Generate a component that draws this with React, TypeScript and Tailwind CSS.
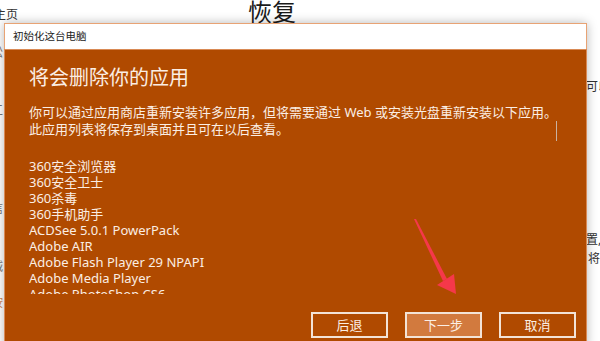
import React from 'react';

const apps = [
  '360安全浏览器',
  '360安全卫士',
  '360杀毒',
  '360手机助手',
  'ACDSee 5.0.1 PowerPack',
  'Adobe AIR',
  'Adobe Flash Player 29 NPAPI',
  'Adobe Media Player',
  'Adobe PhotoShop CS6',
  'Adobe Reader XI',
];

const font = { fontFamily: '"Noto Sans", "Noto Sans CJK SC", sans-serif' };

function DialogButton({ label, primary }: { label: string; primary?: boolean }) {
  return (
    <button
      className={`w-[77px] h-[26px] border-2 border-[#f3e3d6] text-[13px] leading-none text-[#fbeee4] ${
        primary ? 'bg-[#d27a3e]' : 'bg-transparent'
      }`}
    >
      {label}
    </button>
  );
}

export default function App() {
  return (
    <div className="relative w-[600px] h-[341px] overflow-hidden bg-white text-[#222]" style={font}>
      {/* page behind the dialog */}
      <div className="absolute left-[-6px] top-[6px] text-[12px] leading-[18px] text-[#333] whitespace-nowrap">主页</div>
      <div className="absolute left-[248px] top-[-4px] text-[24px] leading-[32px] text-[#1a1a1a] whitespace-nowrap">恢复</div>
      <div className="absolute left-[-9px] top-[44px] flex flex-col text-[12px] text-[#777] leading-[18px]">
        <span>松</span>
        <span className="mt-[40px]">工</span>
        <span className="mt-[18px]">A</span>
        <span className="mt-[18px]">A</span>
        <span className="mt-[8px]">信</span>
        <span className="mt-[40px]">诚</span>
        <span className="mt-[18px] text-[#d08a5a]">按</span>
      </div>
      <div className="absolute left-[586px] top-[78px] text-[12px] leading-[18px] text-[#333] whitespace-nowrap">可以</div>
      <div className="absolute left-[586px] top-[230px] flex flex-col text-[12px] leading-[19px] text-[#333] whitespace-nowrap">
        <span>置,</span>
        <span className="pl-[2px]">将</span>
      </div>

      {/* dialog */}
      <div className="absolute left-[4px] top-[23px] w-[583px] shadow-[0_0_10px_rgba(0,0,0,0.28)]">
        <div className="h-[26px] bg-white border border-b-0 border-[#e8a374] flex items-center pl-[8px] text-[10.5px] text-[#222]">
          初始化这台电脑
        </div>
        <div className="h-[300px] bg-[#b04a00] border-x border-t border-[#d98a55] pl-[24px] pr-[10px] flex flex-col text-[#fbeee4]">
          <div className="mt-[14px] text-[20px] leading-[28px]">将会删除你的应用</div>
          <div className="relative mt-[12px] text-[13px] leading-[17px] whitespace-nowrap">
            <p>你可以通过应用商店重新安装许多应用，但将需要通过 Web 或安装光盘重新安装以下应用。</p>
            <p>此应用列表将保存到桌面并且可在以后查看。</p>
            <div className="absolute left-[527px] top-[17px] w-px h-[20px] bg-[#c9b1a0]" />
          </div>
          <div className="mt-[20px] h-[136px] overflow-hidden text-[13px] leading-[16px]">
            {apps.map((a) => (
              <div key={a}>{a}</div>
            ))}
          </div>
          <div className="mt-[18px] flex justify-end gap-[17px]">
            <DialogButton label="后退" />
            <DialogButton label="下一步" primary />
            <DialogButton label="取消" />
          </div>
        </div>
      </div>

      {/* red annotation arrow */}
      <svg className="absolute left-0 top-0" width="600" height="341" viewBox="0 0 600 341">
        <polygon points="414,219 416,219 447,279 443,281" fill="#f5384a" />
        <polygon points="437,285 454,274 456,294" fill="#f5384a" />
      </svg>
    </div>
  );
}
